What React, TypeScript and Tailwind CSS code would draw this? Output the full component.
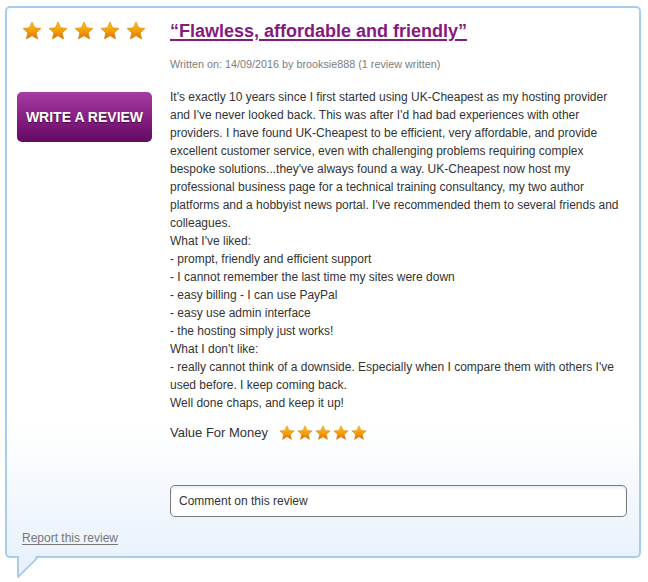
import React from "react";

const STAR = "12,1.2 15.2,8.1 22.8,8.9 17.1,14 18.7,21.6 12,17.7 5.3,21.6 6.9,14 1.2,8.9 8.8,8.1";

function Star({ size, id }: { size: number; id: string }) {
  return (
    <svg width={size} height={size} viewBox="0 0 24 24" className="block">
      <defs>
        <linearGradient id={id} x1="0" y1="0" x2="0" y2="1">
          <stop offset="0%" stopColor="#fbc817" />
          <stop offset="55%" stopColor="#f29c06" />
          <stop offset="100%" stopColor="#de6c05" />
        </linearGradient>
      </defs>
      <polygon points={STAR} fill={`url(#${id})`} stroke="#d9860f" strokeWidth="0.8" strokeLinejoin="round" />
    </svg>
  );
}

const lines = [
  "It's exactly 10 years since I first started using UK-Cheapest as my hosting provider and I've never looked back. This was after I'd had bad experiences with other providers. I have found UK-Cheapest to be efficient, very affordable, and provide excellent customer service, even with challenging problems requiring complex bespoke solutions...they've always found a way. UK-Cheapest now host my professional business page for a technical training consultancy, my two author platforms and a hobbyist news portal. I've recommended them to several friends and colleagues.",
  "What I've liked:",
  "- prompt, friendly and efficient support",
  "- I cannot remember the last time my sites were down",
  "- easy billing - I can use PayPal",
  "- easy use admin interface",
  "- the hosting simply just works!",
  "What I don't like:",
  "- really cannot think of a downside. Especially when I compare them with others I've used before. I keep coming back.",
  "Well done chaps, and keep it up!",
];

export default function App() {
  return (
    <div
      className="relative w-[648px] h-[582px] bg-white overflow-hidden"
      style={{ fontFamily: '"Liberation Sans", Arial, Helvetica, sans-serif' }}
    >
      <div className="ml-[5px] mt-[6px] w-[636px] h-[552px] border-2 border-[#a6cdee] rounded-[5px] bg-[linear-gradient(to_bottom,#ffffff_76%,#e9f2fc_100%)] flex flex-col pt-[13px] pb-[10px]">
        <div className="flex">
          <div className="ml-[10px] w-[135px] shrink-0 flex flex-col">
            <div className="ml-[5px] flex gap-[6px]">
              {[0, 1, 2, 3, 4].map((i) => (
                <Star key={i} size={20} id={`bs${i}`} />
              ))}
            </div>
            <div className="mt-[51px] h-[50px] w-[135px] rounded-[5px] bg-[linear-gradient(to_bottom,#a53ca3,#8a2287_45%,#640962)] flex items-center justify-center">
              <span className="text-white font-bold text-[14px] leading-none [text-shadow:0_1px_1px_rgba(40,0,40,0.7)]">
                WRITE A REVIEW
              </span>
            </div>
          </div>
          <div className="ml-[18px] w-[457px] flex flex-col">
            <a className="text-[18px] leading-[20px] font-bold text-[#86197f] underline decoration-[1.5px] underline-offset-[2px] self-start">
              “Flawless, affordable and friendly”
            </a>
            <div className="mt-[16px] text-[10.8px] leading-[14px] text-[#7d7d7d]">
              Written on: 14/09/2016 by brooksie888 (1 review written)
            </div>
            <div className="mt-[17px] text-[12px] leading-[18px] text-[#333333]">
              {lines.map((l, i) => (
                <div key={i}>{l}</div>
              ))}
            </div>
            <div className="mt-[11px] flex items-center h-[20px]">
              <span className="text-[13px] text-[#333333]">Value For Money</span>
              <div className="ml-[11px] flex gap-[2px]">
                {[0, 1, 2, 3, 4].map((i) => (
                  <Star key={i} size={16} id={`ss${i}`} />
                ))}
              </div>
            </div>
            <div className="mt-[42px] h-[32px] w-[457px] bg-white border border-[#7a7a7a] rounded-[5px] shadow-[inset_0_2px_3px_rgba(0,0,0,0.08)] flex items-center pl-[8px] text-[12px] text-[#333333]">
              Comment on this review
            </div>
          </div>
        </div>
        <div className="mt-[13px] ml-[15px] text-[12px] leading-[16px] text-[#777777] underline underline-offset-[2px]">
          Report this review
        </div>
      </div>
      <svg className="absolute left-0 top-[550px]" width="50" height="32" viewBox="0 550 50 32">
        <polygon points="19,554 38,554 19,575" fill="#e9f2fc" />
        <polyline points="18,556 18,577 39,556" fill="none" stroke="#a6cdee" strokeWidth="2" strokeLinejoin="round" />
      </svg>
    </div>
  );
}
